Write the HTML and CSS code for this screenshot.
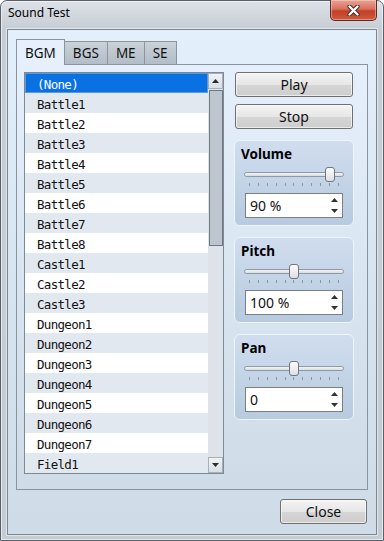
FILE: index.html
```html
<!DOCTYPE html>
<html lang="en">
<head>
    <meta charset="UTF-8">
    <title>Sound Test</title>
    <link rel="stylesheet" href="styles.css">
</head>
<body>

    <div class="window">
        <div class="titlebar">
            <span class="title">Sound Test</span>
            <button class="close-x">
                <svg width="13" height="11" viewBox="0 0 13 11">
                    <path d="M2.5 1.5 L10.5 9.5 M10.5 1.5 L2.5 9.5" stroke="#3b2a28" stroke-width="4.2" stroke-linecap="round"/>
                    <path d="M2.5 1.5 L10.5 9.5 M10.5 1.5 L2.5 9.5" stroke="#fff" stroke-width="2.4" stroke-linecap="round"/>
                </svg>
            </button>
        </div>

        <div class="client">
            <!-- タブ -->
            <div class="tabs">
                <div class="tab active">BGM</div>
                <div class="tab">BGS</div>
                <div class="tab">ME</div>
                <div class="tab">SE</div>
            </div>

            <div class="tab-panel">
                <div class="list-box">
                    <ul class="list">
                        <li class="selected">(None)</li>
                        <li>Battle1</li>
                        <li>Battle2</li>
                        <li>Battle3</li>
                        <li>Battle4</li>
                        <li>Battle5</li>
                        <li>Battle6</li>
                        <li>Battle7</li>
                        <li>Battle8</li>
                        <li>Castle1</li>
                        <li>Castle2</li>
                        <li>Castle3</li>
                        <li>Dungeon1</li>
                        <li>Dungeon2</li>
                        <li>Dungeon3</li>
                        <li>Dungeon4</li>
                        <li>Dungeon5</li>
                        <li>Dungeon6</li>
                        <li>Dungeon7</li>
                        <li>Field1</li>
                    </ul>
                    <div class="scrollbar">
                        <div class="sb-btn">
                            <svg width="7" height="4" viewBox="0 0 7 4"><path d="M3.5 0 L7 4 L0 4 Z" fill="#2b2b2b"/></svg>
                        </div>
                        <div class="sb-track">
                            <div class="sb-thumb"></div>
                        </div>
                        <div class="sb-btn">
                            <svg width="7" height="4" viewBox="0 0 7 4"><path d="M0 0 L7 0 L3.5 4 Z" fill="#2b2b2b"/></svg>
                        </div>
                    </div>
                </div>

                <div class="side">
                    <button class="btn">Play</button>
                    <button class="btn">Stop</button>

                    <div class="group">
                        <div class="group-label">Volume</div>
                        <div class="slider">
                            <div class="track"></div>
                            <div class="thumb" style="left: 86px"></div>
                        </div>
                        <div class="ticks">
                            <i></i><i></i><i></i><i></i><i></i><i></i><i></i><i></i><i></i><i></i><i></i>
                        </div>
                        <div class="spin">
                            <span class="spin-value">90 %</span>
                            <span class="spin-arrows">
                                <svg width="7" height="4" viewBox="0 0 7 4"><path d="M3.5 0 L7 4 L0 4 Z" fill="#333"/></svg>
                                <svg width="7" height="4" viewBox="0 0 7 4"><path d="M0 0 L7 0 L3.5 4 Z" fill="#333"/></svg>
                            </span>
                        </div>
                    </div>

                    <div class="group">
                        <div class="group-label">Pitch</div>
                        <div class="slider">
                            <div class="track"></div>
                            <div class="thumb" style="left: 50px"></div>
                        </div>
                        <div class="ticks">
                            <i></i><i></i><i></i><i></i><i></i><i></i><i></i><i></i><i></i><i></i><i></i>
                        </div>
                        <div class="spin">
                            <span class="spin-value">100 %</span>
                            <span class="spin-arrows">
                                <svg width="7" height="4" viewBox="0 0 7 4"><path d="M3.5 0 L7 4 L0 4 Z" fill="#333"/></svg>
                                <svg width="7" height="4" viewBox="0 0 7 4"><path d="M0 0 L7 0 L3.5 4 Z" fill="#333"/></svg>
                            </span>
                        </div>
                    </div>

                    <div class="group">
                        <div class="group-label">Pan</div>
                        <div class="slider">
                            <div class="track"></div>
                            <div class="thumb" style="left: 50px"></div>
                        </div>
                        <div class="ticks">
                            <i></i><i></i><i></i><i></i><i></i><i></i><i></i><i></i><i></i><i></i><i></i>
                        </div>
                        <div class="spin">
                            <span class="spin-value">0</span>
                            <span class="spin-arrows">
                                <svg width="7" height="4" viewBox="0 0 7 4"><path d="M3.5 0 L7 4 L0 4 Z" fill="#333"/></svg>
                                <svg width="7" height="4" viewBox="0 0 7 4"><path d="M0 0 L7 0 L3.5 4 Z" fill="#333"/></svg>
                            </span>
                        </div>
                    </div>
                </div>
            </div>

            <div class="footer">
                <button class="btn close-btn">Close</button>
            </div>
        </div>
    </div>

</body>
</html>
```

FILE: styles.css
```css
* {
    margin: 0;
    padding: 0;
    box-sizing: border-box;
}

body {
    font-family: 'Noto Sans', 'Open Sans', sans-serif;
    background: #fff;
    color: #000;
}

/* ウィンドウ枠 */
.window {
    width: 384px;
    height: 541px;
    border: 1px solid #59606a;
    border-radius: 7px 7px 0 0;
    padding: 0 6px 5px 6px;
    background: linear-gradient(180deg, #dde2e8 0, #c7cdd4 28px, #c5ccd3 100%);
    box-shadow: inset 0 0 0 1px rgba(255, 255, 255, 0.55);
    display: flex;
    flex-direction: column;
}

.titlebar {
    height: 28px;
    display: flex;
    justify-content: space-between;
    align-items: flex-start;
}

.title {
    font-size: 12px;
    line-height: 16px;
    margin-top: 4px;
    padding-left: 1px;
    color: #000;
}

.close-x {
    width: 47px;
    height: 21px;
    margin-top: -1px;
    border: 1px solid #5b2a22;
    border-top: none;
    border-radius: 0 0 5px 5px;
    background: linear-gradient(180deg, #e8a597 0, #d9705c 45%, #c33f27 55%, #cf5a3c 100%);
    box-shadow: inset 0 0 0 1px rgba(255, 220, 210, 0.45);
    display: flex;
    align-items: center;
    justify-content: center;
}

.client {
    flex: 1;
    border: 1px solid #7c8691;
    box-shadow: 0 0 0 1px rgba(255, 255, 255, 0.5);
    background: linear-gradient(180deg, #e4effc 0, #d8e4f1 50%, #cfdbe7 100%);
    padding: 9px 8px 10px 8px;
    display: flex;
    flex-direction: column;
}

/* タブ */
.tabs {
    display: flex;
    align-items: flex-end;
    height: 26px;
    margin-bottom: -1px;
    position: relative;
    z-index: 1;
}

.tab {
    height: 23px;
    padding: 0 8px;
    margin-left: -1px;
    margin-bottom: 1px;
    border: 1px solid #8a949e;
    border-bottom: none;
    background: linear-gradient(180deg, #c9d1d9, #b3bdc7);
    font-size: 13.5px;
    color: #111;
    display: flex;
    align-items: center;
}

.tab:first-child {
    margin-left: 0;
}

.tab.active {
    height: 26px;
    margin-bottom: 0;
    padding-top: 1px;
    background: #e5f0fc;
    position: relative;
    z-index: 2;
}

.tab-panel {
    border: 1px solid #8a949e;
    background: linear-gradient(180deg, #e5f0fc 0, #d9e5f1 50%, #cfdbe7 100%);
    padding: 7px 13px 15px 7px;
    display: flex;
    gap: 10px;
}

/* リスト */
.list-box {
    width: 200px;
    height: 402px;
    border: 1px solid #7d8995;
    background: #fff;
    display: flex;
}

.list {
    flex: 1;
    list-style: none;
}

.list li {
    height: 20px;
    padding: 2px 0 0 12px;
    line-height: 19px;
    font-family: 'DejaVu Sans Mono', 'Liberation Mono', monospace;
    font-size: 12.5px;
    letter-spacing: -0.7px;
    color: #111;
}

.list li:nth-child(even) {
    background: #e2e8ef;
}

.list li.selected {
    background: #0a71e3;
    color: #fff;
    box-shadow: inset 0 0 0 1px #5a98de;
}

.scrollbar {
    width: 15px;
    display: flex;
    flex-direction: column;
    background: #dde3e9;
}

.sb-btn {
    height: 16px;
    border: 1px solid #a7b0b9;
    background: linear-gradient(180deg, #f0f3f6, #d9dfe5);
    display: flex;
    align-items: center;
    justify-content: center;
}

.sb-track {
    flex: 1;
    padding: 1px 0 0 1px;
}

.sb-thumb {
    height: 156px;
    border: 1px solid #6e7882;
    background: #bdc6cf;
}

/* 右側 */
.side {
    width: 120px;
    display: flex;
    flex-direction: column;
    gap: 7px;
}

.btn {
    height: 25px;
    border: 1px solid #707070;
    border-radius: 3px;
    background: linear-gradient(180deg, #f4f4f4 0, #e6e6e6 50%, #d6d6d6 51%, #cdcdcd 100%);
    box-shadow: inset 0 0 0 1px rgba(255, 255, 255, 0.6);
    font-family: 'Noto Sans', 'Open Sans', sans-serif;
    font-size: 14px;
    color: #111;
}

.side .btn {
    margin: 0 1px;
}

.group {
    margin-top: 4px;
    border: 1px solid #eef4fb;
    border-radius: 6px;
    background: linear-gradient(180deg, #d0ddee, #b7cadf);
    padding: 5px 9px 7px 9px;
    display: flex;
    flex-direction: column;
}

.group-label {
    font-size: 13.5px;
    font-weight: bold;
    line-height: 17px;
    margin-left: -3px;
    color: #000;
}

.slider {
    position: relative;
    height: 15px;
    margin-top: 4px;
}

.track {
    height: 5px;
    margin-top: 5px;
    border: 1px solid #8e99a4;
    border-radius: 3px;
    background: linear-gradient(180deg, #f3f5f7, #d6dce2);
}

.thumb {
    position: absolute;
    top: 0;
    width: 10px;
    height: 15px;
    margin-left: -5px;
    border: 1px solid #6e7780;
    border-radius: 3px;
    background: linear-gradient(180deg, #fcfcfc, #dcdfe3);
}

.ticks {
    height: 3px;
    margin-top: 1px;
    padding: 0 5px;
    display: flex;
    justify-content: space-between;
}

.ticks i {
    width: 1px;
    background: #8b95a0;
}

.spin {
    height: 25px;
    margin: 7px 1px 0 1px;
    border: 1px solid #7a7f86;
    background: #fff;
    display: flex;
    align-items: center;
    justify-content: space-between;
    padding: 0 4px 0 4px;
}

.spin-value {
    font-size: 14px;
    color: #111;
}

.spin-arrows {
    display: flex;
    flex-direction: column;
    gap: 7px;
}

.spin-arrows svg {
    display: block;
}

.footer {
    margin-top: 9px;
    display: flex;
    justify-content: flex-end;
    padding-right: 1px;
}

.close-btn {
    width: 87px;
}
```
